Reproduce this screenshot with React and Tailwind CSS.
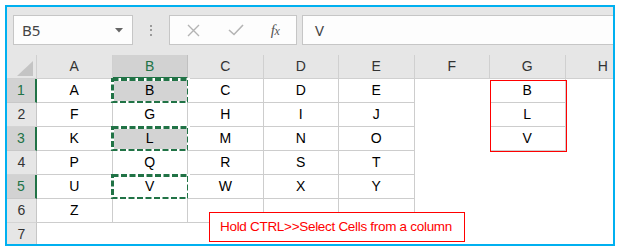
import React from 'react';

const COLS = ['A', 'B', 'C', 'D', 'E', 'F', 'G', 'H'];
const DATA = [
  ['A', 'B', 'C', 'D', 'E', '', 'B', ''],
  ['F', 'G', 'H', 'I', 'J', '', 'L', ''],
  ['K', 'L', 'M', 'N', 'O', '', 'V', ''],
  ['P', 'Q', 'R', 'S', 'T', '', '', ''],
  ['U', 'V', 'W', 'X', 'Y', '', '', ''],
  ['Z', '', '', '', '', '', '', ''],
  ['', '', '', '', '', '', '', ''],
];
const SELECTED_ROWS = [0, 2, 4];

const font = { fontFamily: '"Liberation Sans", Arial, sans-serif' };

// marching ants around a copied cell
const Ants = () => (
  <svg className="absolute -left-[2px] -top-px pointer-events-none" width="79" height="26">
    <rect x="1.5" y="1.5" width="76" height="23" fill="none" stroke="#ffffff" strokeWidth="3" />
    <rect x="1.5" y="1.5" width="76" height="23" fill="none" stroke="#217346" strokeWidth="3" strokeDasharray="6 2.5" />
  </svg>
);

const Toolbar = () => (
  <div className="h-[48px] shrink-0 flex items-start pt-[8px] pl-[6px]">
    <div className="w-[120px] h-[30px] shrink-0 bg-[#fdfdfd] border border-[#c6c6c6] flex items-center pl-[8px] pr-[9px]">
      <span className="text-[15px] text-[#444] flex-1" style={{ fontFamily: '"Noto Sans", sans-serif' }}>B5</span>
      <svg width="8" height="5" viewBox="0 0 8 5"><path d="M0 0 L8 0 L4 4.5 Z" fill="#666" /></svg>
    </div>
    <div className="w-[36px] h-[30px] shrink-0 flex flex-col items-center justify-center gap-[2.5px]">
      <span className="w-[2px] h-[2px] bg-[#9a9a9a]" />
      <span className="w-[2px] h-[2px] bg-[#9a9a9a]" />
      <span className="w-[2px] h-[2px] bg-[#9a9a9a]" />
    </div>
    <div className="w-[128px] h-[30px] shrink-0 bg-[#fdfdfd] border border-[#c6c6c6] flex items-center">
      <div className="w-[44px] flex justify-center pl-[3px]">
        <svg width="13" height="13" viewBox="0 0 13 13">
          <path d="M1 1 L12 12 M12 1 L1 12" stroke="#b4b4b4" strokeWidth="1.4" />
        </svg>
      </div>
      <div className="w-[44px] flex justify-center">
        <svg width="16" height="12" viewBox="0 0 16 12">
          <path d="M1 6 L6 10.5 L15 1" fill="none" stroke="#b4b4b4" strokeWidth="1.6" />
        </svg>
      </div>
      <div className="flex-1 flex justify-center pr-[4px]">
        <span className="text-[15px] italic text-[#555] tracking-[-0.5px]" style={{ fontFamily: '"Liberation Serif", serif' }}>
          f<span className="text-[12px]">x</span>
        </span>
      </div>
    </div>
    <div className="ml-[5px] w-[330px] h-[30px] shrink-0 bg-[#fdfdfd] border border-[#c6c6c6] flex items-center pl-[12px]">
      <span className="text-[15px] text-[#444]" style={{ fontFamily: '"Noto Sans", sans-serif' }}>V</span>
    </div>
  </div>
);

const cellClass = (r, c) => {
  const base = 'relative h-[24px] flex items-center justify-center text-[14px] text-black';
  if ((r < 6 && c < 5) || (r < 3 && c === 6)) {
    const fill = c === 1 && (r === 0 || r === 2) ? 'bg-[#d3d3d3]' : 'bg-white';
    return `${base} ${fill} border-r border-b border-[#cdcdcd]`;
  }
  return `${base} bg-white`;
};

export default function App() {
  return (
    <div className="w-[620px] h-[251px] bg-white pt-[5px] pl-[5px]" style={font}>
      <div className="w-[610px] h-[241px] border-2 border-[#00b0f0] bg-[#e6e6e6] overflow-hidden flex flex-col">
        <Toolbar />
        <div className="relative grid grid-cols-[30px_repeat(8,75.5px)] auto-rows-[24px] w-[634px]">
          {/* corner */}
          <div className="bg-[#e6e6e6] border-r border-b border-[#d0d0d0] flex items-end justify-end pr-[3px] pb-[2px]">
            <svg width="16" height="15" viewBox="0 0 16 15"><path d="M16 0 L16 15 L0 15 Z" fill="#c4c4c4" /></svg>
          </div>
          {COLS.map((c, i) =>
            i === 1 ? (
              <div key={c} className="bg-[#d2d2d2] border-r border-[#c0c0c0] border-b-2 border-b-[#217346] flex items-center justify-center text-[14px] text-[#217346]">
                {c}
              </div>
            ) : (
              <div key={c} className="bg-[#e6e6e6] border-r border-b border-[#d0d0d0] flex items-center justify-center text-[14px] text-[#333]">
                {c}
              </div>
            )
          )}
          {DATA.map((row, r) => (
            <React.Fragment key={r}>
              {SELECTED_ROWS.includes(r) ? (
                <div className="bg-[#d2d2d2] border-b border-[#c8c8c8] border-r-2 border-r-[#217346] flex items-center justify-center text-[14px] text-[#217346]">
                  {r + 1}
                </div>
              ) : (
                <div className="bg-[#e6e6e6] border-b border-[#d4d4d4] border-r border-r-[#c6c6c6] flex items-center justify-center text-[14px] text-[#333]">
                  {r + 1}
                </div>
              )}
              {row.map((v, c) => (
                <div key={c} className={cellClass(r, c)}>
                  {v}
                  {c === 1 && (r === 0 || r === 2 || r === 4) && <Ants />}
                </div>
              ))}
            </React.Fragment>
          ))}
          {/* red outline drawn around G1:G3 */}
          <div className="absolute left-[483px] top-[25px] w-[77px] h-[72px] border border-[#ff0000] pointer-events-none" />
          {/* floating text box */}
          <div className="absolute left-[202px] top-[157px] w-[256px] h-[30px] bg-white border border-[#ff0000] flex items-center pl-[10px] text-[13.5px] tracking-[-0.3px] whitespace-nowrap text-[#ff0000]">
            Hold CTRL&gt;&gt;Select Cells from a column
          </div>
        </div>
      </div>
    </div>
  );
}
